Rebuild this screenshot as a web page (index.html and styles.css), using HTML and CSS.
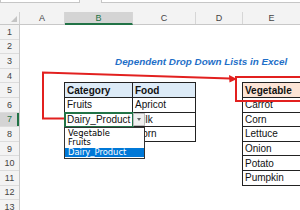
FILE: index.html
```html
<!DOCTYPE html>
<html lang="en">
<head>
  <meta charset="UTF-8" />
  <meta name="viewport" content="width=device-width, initial-scale=1.0"/>
  <title>Dependent Drop Down Lists in Excel</title>
  <link rel="stylesheet" href="styles.css">
</head>
<body>
  <div class="app">
    <!-- Name box / formula bar -->
    <div class="toolbar">
      <div class="name-box"></div>
      <div class="formula-bar"></div>
    </div>

    <!-- Column headers -->
    <div class="col-heads">
      <div class="corner"><span class="corner-tri"></span></div>
      <div class="col-head col-a">A</div>
      <div class="col-head col-b active">B</div>
      <div class="col-head col-c">C</div>
      <div class="col-head col-d">D</div>
      <div class="col-head col-e">E</div>
    </div>

    <div class="sheet">
      <div class="row-heads">
        <div class="row-head">1</div>
        <div class="row-head">2</div>
        <div class="row-head">3</div>
        <div class="row-head">4</div>
        <div class="row-head">5</div>
        <div class="row-head">6</div>
        <div class="row-head active">7</div>
        <div class="row-head">8</div>
        <div class="row-head">9</div>
        <div class="row-head">10</div>
        <div class="row-head">11</div>
        <div class="row-head">12</div>
        <div class="row-head">13</div>
      </div>

      <div class="cells">
        <div class="title">Dependent Drop Down Lists in Excel</div>

        <!-- Category / Food table -->
        <div class="table cat-table">
          <div class="cell head">Category</div>
          <div class="cell head">Food</div>
          <div class="cell">Fruits</div>
          <div class="cell">Apricot</div>
          <div class="cell selected">
            Dairy_Product
            <span class="dd-btn"><span class="dd-tri"></span></span>
            <ul class="dd-list">
              <li>Vegetable</li>
              <li>Fruits</li>
              <li class="hl">Dairy_Product</li>
            </ul>
          </div>
          <div class="cell">Milk</div>
          <div class="cell"></div>
          <div class="cell">Corn</div>
        </div>

        <!-- Vegetable list -->
        <div class="table veg-table">
          <div class="cell head">Vegetable</div>
          <div class="cell">Carrot</div>
          <div class="cell">Corn</div>
          <div class="cell">Lettuce</div>
          <div class="cell">Onion</div>
          <div class="cell">Potato</div>
          <div class="cell">Pumpkin</div>
        </div>
      </div>
    </div>

    <!-- Red callout arrow -->
    <svg class="callout" width="300" height="210" viewBox="0 0 300 210">
      <path d="M65 118.5 H43 V72.5 L230 78.6" fill="none" stroke="#e2201f" stroke-width="2"/>
      <polygon points="237,79 229,75 229.5,82.5" fill="#e2201f"/>
      <rect x="236" y="77" width="80" height="24" fill="none" stroke="#e2201f" stroke-width="2"/>
    </svg>
  </div>
</body>
</html>
```

FILE: styles.css
```css
body {
  margin: 0;
  font-family: 'Liberation Sans', Arial, sans-serif;
  background-color: #fff;
}

.app {
  position: relative;
  width: 300px;
  height: 210px;
  overflow: hidden;
}

.toolbar {
  display: flex;
  height: 12px;
  background-color: #f3f3f3;
}

.name-box {
  width: 78px;
  height: 2px;
  background-color: #fff;
  border: 1px solid #c6c6c6;
  border-top: none;
}

.formula-bar {
  flex: 1;
  height: 2px;
  margin-left: 21px;
  background-color: #fff;
  border: 1px solid #c6c6c6;
  border-top: none;
  border-right: none;
}

.col-heads {
  display: flex;
  height: 13px;
  background-color: #f3f3f3;
  border-bottom: 1px solid #c8c8c8;
  box-sizing: border-box;
  font-size: 9px;
  color: #444;
}

.corner {
  position: relative;
  width: 20px;
  flex-shrink: 0;
  border-right: 1px solid #d0d0d0;
  box-sizing: border-box;
}

.corner-tri {
  position: absolute;
  right: 2px;
  bottom: 2px;
  width: 0;
  height: 0;
  border-left: 6px solid transparent;
  border-bottom: 6px solid #c4c4c4;
}

.col-head {
  display: flex;
  align-items: center;
  justify-content: center;
  flex-shrink: 0;
  border-right: 1px solid #d6d6d6;
  box-sizing: border-box;
}

.col-a { width: 45px; }
.col-b { width: 68px; }
.col-c { width: 63px; }
.col-d { width: 47px; }
.col-e { flex: 1; border-right: none; }

.col-head.active {
  background-color: #d4d4d4;
  color: #217346;
  border-bottom: 2px solid #217346;
  margin-bottom: -1px;
}

.sheet {
  display: flex;
}

.row-heads {
  width: 20px;
  flex-shrink: 0;
  display: flex;
  flex-direction: column;
  background-color: #f3f3f3;
  border-right: 1px solid #c8c8c8;
  box-sizing: border-box;
  font-size: 9px;
  color: #444;
}

.row-head {
  height: 14.6px;
  flex-shrink: 0;
  display: flex;
  align-items: center;
  justify-content: center;
  border-bottom: 1px solid #dcdcdc;
  box-sizing: border-box;
}

.row-head.active {
  background-color: #d4d4d4;
  color: #217346;
  box-shadow: inset -2px 0 0 #217346;
}

.cells {
  flex: 1;
  min-width: 0;
  display: grid;
  grid-template-columns: 45px 68px 63px 47px minmax(0, 1fr);
  grid-template-rows: repeat(13, 14.6px);
}

.title {
  grid-row: 3;
  grid-column: 2 / 6;
  padding-left: 50px;
  display: flex;
  align-items: center;
  font-size: 9.9px;
  font-weight: bold;
  font-style: italic;
  color: #1f6fc8;
  white-space: nowrap;
}

.table {
  display: grid;
  border-top: 1px solid #222;
  border-left: 1px solid #222;
  margin-top: -1px;
  margin-left: -1px;
  font-size: 10px;
  color: #111;
}

.cat-table {
  grid-row: 5 / 9;
  grid-column: 2 / 4;
  grid-template-columns: 68px 63px;
  grid-auto-rows: 14.6px;
}

.veg-table {
  grid-row: 5 / 12;
  grid-column: 5;
  width: 80px;
  grid-template-columns: 1fr;
  grid-auto-rows: 14.6px;
}

.cell {
  display: flex;
  align-items: center;
  padding-left: 2px;
  border-right: 1px solid #222;
  border-bottom: 1px solid #222;
  box-sizing: border-box;
  white-space: nowrap;
}

.cat-table .head {
  background-color: #ddebf7;
  font-weight: bold;
}

.veg-table .head {
  background-color: #fce4d6;
  font-weight: bold;
}

.cell.selected {
  position: relative;
  z-index: 2;
  outline: 2px solid #217346;
  outline-offset: -1px;
}

.dd-btn {
  position: absolute;
  top: 0;
  right: -13px;
  width: 12px;
  height: 13px;
  background-color: #f0f0f0;
  border: 1px solid #bdbdbd;
  box-sizing: border-box;
  display: flex;
  align-items: center;
  justify-content: center;
}

.dd-tri {
  width: 0;
  height: 0;
  border-left: 2.5px solid transparent;
  border-right: 2.5px solid transparent;
  border-top: 3px solid #666;
}

.dd-list {
  position: absolute;
  top: 100%;
  left: -1px;
  width: 81px;
  margin: 1px 0 0;
  padding: 1px 0;
  list-style: none;
  background-color: #fff;
  border: 1px solid #333;
  box-sizing: border-box;
  font-family: 'DejaVu Sans', sans-serif;
  font-size: 8.4px;
  color: #000;
}

.dd-list li {
  height: 9.2px;
  line-height: 9.2px;
  padding-left: 3px;
}

.dd-list li.hl {
  background-color: #0078d7;
  color: #fff;
}

.callout {
  position: absolute;
  top: 0;
  left: 0;
  pointer-events: none;
}
```
